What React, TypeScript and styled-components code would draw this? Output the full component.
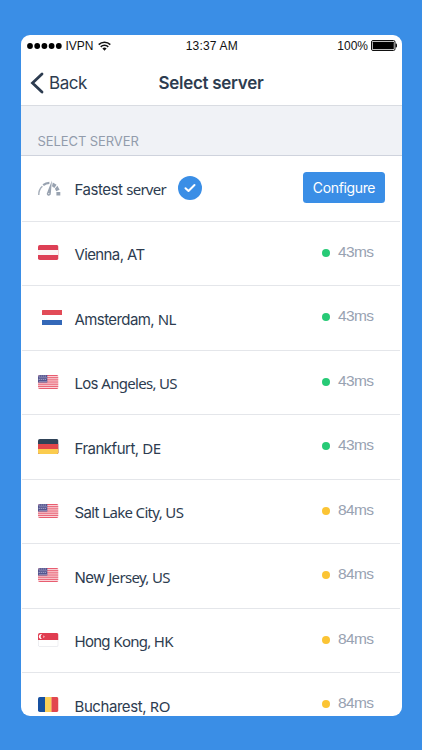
import React from 'react';
import styled, { createGlobalStyle } from 'styled-components';

const GlobalStyle = createGlobalStyle`
  * { box-sizing: border-box; }
  body { margin: 0; background: #3a8ee6; overflow: hidden; }
`;

const Page = styled.div`
  height: 750px;
  padding: 35px 20px 34px 20.5px;
  background: #3a8ee6;
  font-family: Inter, 'Liberation Sans', sans-serif;
  color: #2d3c50;
`;

const Phone = styled.main`
  display: flex;
  flex-direction: column;
  height: 681px;
  background: #fff;
  border-radius: 9px;
  overflow: hidden;
`;

const StatusBar = styled.div`
  display: grid;
  grid-template-columns: 1fr auto 1fr;
  align-items: center;
  flex: none;
  height: 21px;
  padding: 0 5px 0 6px;
  font: 12px/20px 'Liberation Sans', sans-serif;
  color: #111;
  white-space: nowrap;
`;

const StatusGroup = styled.div<{ $end?: boolean }>`
  display: flex;
  align-items: center;
  justify-content: ${p => (p.$end ? 'flex-end' : 'flex-start')};
  gap: ${p => (p.$end ? 3 : 4)}px;
`;

const StatusText = styled.span<{ $spacing?: number }>`
  letter-spacing: ${p => p.$spacing ?? 0}px;
  padding-top: 1px;
`;

const NavBar = styled.header`
  display: grid;
  grid-template-columns: 1fr auto 1fr;
  align-items: center;
  flex: none;
  height: 50px;
  padding: 4px 10px 0 9.5px;
  border-bottom: 1px solid #d9dce2;
`;

const BackButton = styled.button`
  display: flex;
  align-items: center;
  gap: 5px;
  padding: 0;
  border: 0;
  background: none;
  font: 17px/22px Inter, sans-serif;
  letter-spacing: -0.45px;
  color: #2d3c50;
`;

const Title = styled.h1`
  margin: 0;
  font-size: 17px;
  line-height: 22px;
  font-weight: 600;
  letter-spacing: -0.3px;
`;

const SectionHeader = styled.h2`
  flex: none;
  display: flex;
  align-items: flex-end;
  height: 49.5px;
  margin: 0;
  padding: 0 17px 5px;
  background: #f0f2f6;
  border-bottom: 1px solid #cfd3dd;
  font-size: 13px;
  line-height: 18px;
  font-weight: 400;
  letter-spacing: -0.08px;
  color: #929cac;
`;

const List = styled.ul`
  margin: 0;
  padding: 0 2px 0 1px;
  list-style: none;
`;

const Row = styled.li<{ $first?: boolean }>`
  display: flex;
  align-items: center;
  height: ${p => (p.$first ? 66 : 64.5)}px;
  padding: 0 ${p => (p.$first ? 15 : 26.5)}px 0 16.5px;
  border-bottom: 1px solid #e4e6ea;
`;

const FlagSlot = styled.span<{ $shift?: number }>`
  display: flex;
  width: 36.5px;
  flex: none;
  padding-left: ${p => p.$shift ?? 0}px;
  margin-top: -1px;
`;

const Name = styled.span<{ $spacing: number }>`
  font-size: 15px;
  line-height: 20px;
  letter-spacing: ${p => p.$spacing}px;
  white-space: pre;
  padding-top: 3px;
`;

const Humanist = styled.span<{ $spacing: number }>`
  font-family: 'Noto Sans', sans-serif;
  letter-spacing: ${p => p.$spacing}px;
`;

const Ping = styled.span`
  display: flex;
  align-items: center;
  gap: 8px;
  margin-left: auto;
  margin-top: -3px;
  font: 15.5px/20px 'Liberation Sans', sans-serif;
  letter-spacing: -0.6px;
  color: #98a2b2;
`;

const Dot = styled.i<{ $slow?: boolean }>`
  width: 8px;
  height: 8px;
  margin-top: 2px;
  border-radius: 50%;
  background: ${p => (p.$slow ? '#fbc434' : '#27ca76')};
`;

const Check = styled.span`
  display: flex;
  align-items: center;
  justify-content: center;
  width: 24px;
  height: 24px;
  margin-left: 12px;
  border-radius: 50%;
  background: #3a8ee6;
`;

const Configure = styled.button`
  width: 82px;
  height: 31px;
  margin: 0 0 2px auto;
  padding: 1px 0 0;
  border: 0;
  border-radius: 3.5px;
  background: #3a8ee6;
  color: #fff;
  font: 14px/30px Inter, sans-serif;
  letter-spacing: -0.35px;
`;

type Country = 'at' | 'nl' | 'us' | 'de' | 'sg' | 'ro';

const Flag = ({ country }: { country: Country }) => {
  const h = country === 'us' || country === 'sg' ? 14 : 15;
  const clip = `clip-${React.useId().replace(/[^a-zA-Z0-9]/g, '')}`;
  return (
    <svg width="20.5" height={h} viewBox={`0 0 20.5 ${h}`}>
      <clipPath id={clip}>
        <rect width="20.5" height={h} rx={country === 'nl' ? 0.5 : 1.8} />
      </clipPath>
      <g clipPath={`url(#${clip})`}>
        {country === 'at' && (
          <>
            <rect width="20.5" height="15" fill="#dd3f55" />
            <rect y="5" width="20.5" height="5" fill="#faf5f6" />
          </>
        )}
        {country === 'nl' && (
          <>
            <rect width="20.5" height="5" fill="#e24b57" />
            <rect y="5" width="20.5" height="5" fill="#fff" />
            <rect y="10" width="20.5" height="5" fill="#3468b8" />
          </>
        )}
        {country === 'de' && (
          <>
            <rect width="20.5" height="15" fill="#2f4358" />
            <rect y="5" width="20.5" height="10" fill="#e2474a" />
            <rect y="10" width="20.5" height="5" fill="#fbcc4e" />
          </>
        )}
        {country === 'ro' && (
          <>
            <rect width="7" height="15" fill="#1750a0" />
            <rect x="7" width="6.7" height="15" fill="#fbcf58" />
            <rect x="13.5" width="7" height="15" fill="#e2474f" />
          </>
        )}
        {country === 'us' && (
          <>
            <rect width="20.5" height="14" fill="#fbe3e6" />
            {[0, 2.15, 4.3, 6.45, 8.6, 10.75, 12.9].map(y => (
              <rect key={y} y={y} width="20.5" height="1.15" fill="#e85d70" />
            ))}
            <rect width="9.3" height="7.5" fill="#55558f" />
            {[1, 2.8, 4.6, 6.4].map((y, row) =>
              [1.2, 3.2, 5.2, 7.2].map(x => (
                <circle key={`${x}-${y}`} cx={x + (row % 2) * 0.8} cy={y} r="0.5" fill="#d5d4e8" />
              )),
            )}
          </>
        )}
        {country === 'sg' && (
          <>
            <rect width="20.5" height="14" fill="#fff" />
            <rect width="20.5" height="7" fill="#e03c50" />
            <path d="M4 1.2A2.5 2.5 0 1 0 4 6A2.8 2.8 0 0 1 4 1.2Z" fill="#fff" />
            <path d="M5 2.2l1 .8 1 .7-1 .7-1 .7.3-1.4Z" fill="#f6b8c0" />
            <path d="M.3 7v5.2a1.5 1.5 0 0 0 1.5 1.5h16.9a1.5 1.5 0 0 0 1.5-1.5V7" fill="none" stroke="#c9cdd5" strokeOpacity=".7" strokeWidth=".6" />
          </>
        )}
      </g>
    </svg>
  );
};

const Gauge = () => (
  <svg width="23" height="16" viewBox="0 0 23 16" fill="none">
    <path d="M.8 15A11 11 0 0 1 4.4 6.2" stroke="#a4adb9" strokeWidth="1.4" />
    <path d="M5.2 5.2A10 10 0 0 1 11.4 2.9" stroke="#98a2b0" strokeWidth="2.2" />
    <path d="M14.8 2.6L18.6 4.8L16.4 7.9L14 6.3Z" fill="#98a2b0" />
    <path d="M19.4 5.8L21.6 9.8L18.2 11.3L16.9 8.7Z" fill="#98a2b0" />
    <path d="M18.4 12.1H22.3V15.5H18.4Z" fill="#98a2b0" />
    <path d="M13.9.6L9.1 12.7a2 2 0 1 0 3.7 1.1Z" fill="#98a2b0" />
    <circle cx="10.8" cy="13.6" r=".6" fill="#fff" />
  </svg>
);

interface Server {
  country: Country;
  lead: string;
  rest?: string;
  spacing: number;
  ms: number;
}

const servers: Server[] = [
  { country: 'at', lead: 'Vienna, AT', spacing: -0.62, ms: 43 },
  { country: 'nl', lead: 'Amsterdam, ', rest: 'NL', spacing: -0.58, ms: 43 },
  { country: 'us', lead: 'Los ', rest: 'Angeles, US', spacing: -0.7, ms: 43 },
  { country: 'de', lead: 'Frankfurt, ', rest: 'DE', spacing: -0.5, ms: 43 },
  { country: 'us', lead: 'Salt ', rest: 'Lake City, US', spacing: -0.66, ms: 84 },
  { country: 'us', lead: 'New ', rest: 'Jersey, US', spacing: -0.66, ms: 84 },
  { country: 'sg', lead: 'Hong ', rest: 'Kong, HK', spacing: -0.72, ms: 84 },
  { country: 'ro', lead: 'Bucharest, ', rest: 'RO', spacing: -0.43, ms: 84 },
];

export default function App() {
  return (
    <Page>
      <GlobalStyle />
      <Phone>
        <StatusBar>
          <StatusGroup>
            <svg width="35" height="6" viewBox="0 0 35 6">
              {[3, 10.2, 17.4, 24.6, 31.8].map(x => (
                <circle key={x} cx={x} cy="3" r="2.9" fill="#000" />
              ))}
            </svg>
            <StatusText>IVPN</StatusText>
            <svg width="13" height="10" viewBox="0 0 13 10" fill="none" stroke="#111" strokeWidth="1.5">
              <path d="M.7 3.6a8.2 8.2 0 0 1 11.6 0M2.7 5.9a5.4 5.4 0 0 1 7.6 0" />
              <path d="M4.4 7.5a3 3 0 0 1 4.2 0L6.5 9.7Z" fill="#111" stroke="none" />
            </svg>
          </StatusGroup>
          <StatusText $spacing={0.18}>13:37 AM</StatusText>
          <StatusGroup $end>
            <StatusText>100%</StatusText>
            <svg width="26" height="11" viewBox="0 0 26 11">
              <rect x=".5" y=".5" width="23.5" height="10" rx="1.5" fill="#fff" stroke="#111" />
              <rect x="1.7" y="1.7" width="21.1" height="7.6" rx=".5" fill="#000" />
              <path d="M24.5 3.5h.5a1 1 0 0 1 1 1v2a1 1 0 0 1-1 1h-.5Z" fill="#111" />
            </svg>
          </StatusGroup>
        </StatusBar>
        <NavBar>
          <BackButton>
            <svg width="14" height="22" viewBox="0 0 14 22" fill="none">
              <path d="M12 2L2.5 11L12 20" stroke="#2d3c50" strokeWidth="2.8" strokeLinecap="round" strokeLinejoin="miter" />
            </svg>
            Back
          </BackButton>
          <Title>Select server</Title>
        </NavBar>
        <SectionHeader>SELECT SERVER</SectionHeader>
        <List>
          <Row $first>
            <FlagSlot><Gauge /></FlagSlot>
            <Name $spacing={-0.45}>
              Fastest <Humanist $spacing={-0.75}>server</Humanist>
            </Name>
            <Check>
              <svg width="12" height="10" viewBox="0 0 12 10" fill="none">
                <path d="M1.5 5.2L4.5 8L10.5 2" stroke="#fff" strokeWidth="2" strokeLinecap="round" strokeLinejoin="round" />
              </svg>
            </Check>
            <Configure>Configure</Configure>
          </Row>
          {servers.map(s => (
            <Row key={s.lead}>
              <FlagSlot $shift={s.country === 'nl' ? 3.5 : 0}>
                <Flag country={s.country} />
              </FlagSlot>
              <Name $spacing={s.spacing}>
                {s.lead}
                {s.rest && <Humanist $spacing={s.spacing}>{s.rest}</Humanist>}
              </Name>
              <Ping>
                <Dot $slow={s.ms > 60} />
                {s.ms}ms
              </Ping>
            </Row>
          ))}
        </List>
      </Phone>
    </Page>
  );
}
